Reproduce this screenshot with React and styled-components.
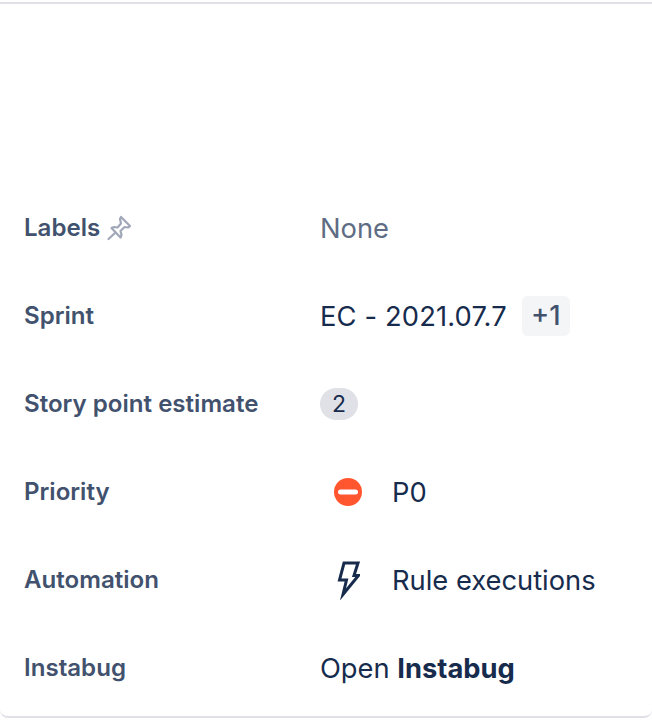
import React from 'react';
import styled, { createGlobalStyle } from 'styled-components';

const GlobalStyle = createGlobalStyle`
  html, body {
    margin: 0;
    padding: 0;
    background: #ffffff;
  }
  body {
    font-family: 'Inter', 'Liberation Sans', sans-serif;
  }
`

function PinIcon() {
  return (
    <svg width="28" height="28" viewBox="0 0 28 28" fill="none" stroke="#A0A7B8" strokeWidth="2.2" strokeLinejoin="round" strokeLinecap="round">
      <path d="M16 3 L25 12 L23 13.5 L19.5 13 L15.5 17 L16.5 21 L15.5 23.5 L6.5 14 L9 13 L12.5 13.5 L16 9.5 L15 5 Z" />
      <path d="M10 19 L3.5 25" />
    </svg>
  )
}

function BlockedIcon() {
  return (
    <svg width="28" height="28" viewBox="0 0 28 28">
      <circle cx="14" cy="14" r="14" fill="#FF5630" />
      <rect x="4" y="11.5" width="20" height="5" rx="2.5" fill="#ffffff" />
    </svg>
  )
}

function BoltIcon() {
  return (
    <svg width="24" height="40" viewBox="0 0 24 40" fill="none" stroke="#172B4D" strokeWidth="3" strokeLinejoin="miter" strokeMiterlimit="10">
      <path d="M8 3 H22 L18 15.5 H22.5 L7 34.5 L10.5 20 H3.5 Z" />
    </svg>
  )
}

export default function App() {
  return (
    <>
      <GlobalStyle />
      <Page>
        <Card>
          <FieldRow>
            <FieldLabel>Labels <PinWrap><PinIcon /></PinWrap></FieldLabel>
            <Muted>None</Muted>
          </FieldRow>
          <FieldRow>
            <FieldLabel>Sprint</FieldLabel>
            <FieldValue>
              <SprintName>EC - 2021.07.7</SprintName>
              <MoreTag>+1</MoreTag>
            </FieldValue>
          </FieldRow>
          <FieldRow>
            <FieldLabel>Story point estimate</FieldLabel>
            <FieldValue><Estimate>2</Estimate></FieldValue>
          </FieldRow>
          <FieldRow>
            <FieldLabel>Priority</FieldLabel>
            <FieldValue>
              <IconSlot><BlockedIcon /></IconSlot>
              P0
            </FieldValue>
          </FieldRow>
          <FieldRow>
            <FieldLabel>Automation</FieldLabel>
            <FieldValue>
              <IconSlot><BoltIcon /></IconSlot>
              Rule executions
            </FieldValue>
          </FieldRow>
          <FieldRow>
            <FieldLabel>Instabug</FieldLabel>
            <FieldValue>Open&nbsp;<strong>Instabug</strong></FieldValue>
          </FieldRow>
        </Card>
      </Page>
    </>
  );
}

const Page = styled.div`
  width: 652px;
  height: 722px;
  padding-top: 2px;
  box-sizing: border-box;
  background: #ffffff;
  overflow: hidden;
`
const Card = styled.div`
  height: 716px;
  box-sizing: border-box;
  padding: 180px 0 0 24px;
  border-top: 2px solid #dfe1e6;
  border-bottom: 2px solid #dfe1e6;
  border-radius: 0 0 8px 8px;
`
const FieldRow = styled.div`
  display: grid;
  grid-template-columns: 296px 1fr;
  align-items: center;
  height: 88px;
`
const FieldLabel = styled.div`
  display: flex;
  align-items: center;
  gap: 6px;
  height: 30px;
  padding-bottom: 2px;
  font-size: 24.1px;
  font-weight: 600;
  color: #42526e;
`
const PinWrap = styled.span`
  display: flex;
  margin: 2px 0 0 -1px;
`
const FieldValue = styled.div`
  display: flex;
  align-items: center;
  font-size: 27.3px;
  color: #172b4d;
  strong {
    font-weight: 700;
  }
`
const Muted = styled(FieldValue)`
  color: #5e6c84;
`
const SprintName = styled.span`
  letter-spacing: 0.15px;
`
const MoreTag = styled.span`
  margin-left: 15px;
  width: 48px;
  height: 40px;
  line-height: 40px;
  border-radius: 6px;
  background: #f4f5f7;
  color: #42526e;
  font-weight: 500;
  text-align: center;
`
const Estimate = styled.span`
  width: 38px;
  height: 32px;
  line-height: 32px;
  border-radius: 16px;
  background: #dfe1e6;
  text-align: center;
  font-size: 23px;
`
const IconSlot = styled.span`
  display: flex;
  justify-content: center;
  width: 56px;
  margin-right: 16px;
`
